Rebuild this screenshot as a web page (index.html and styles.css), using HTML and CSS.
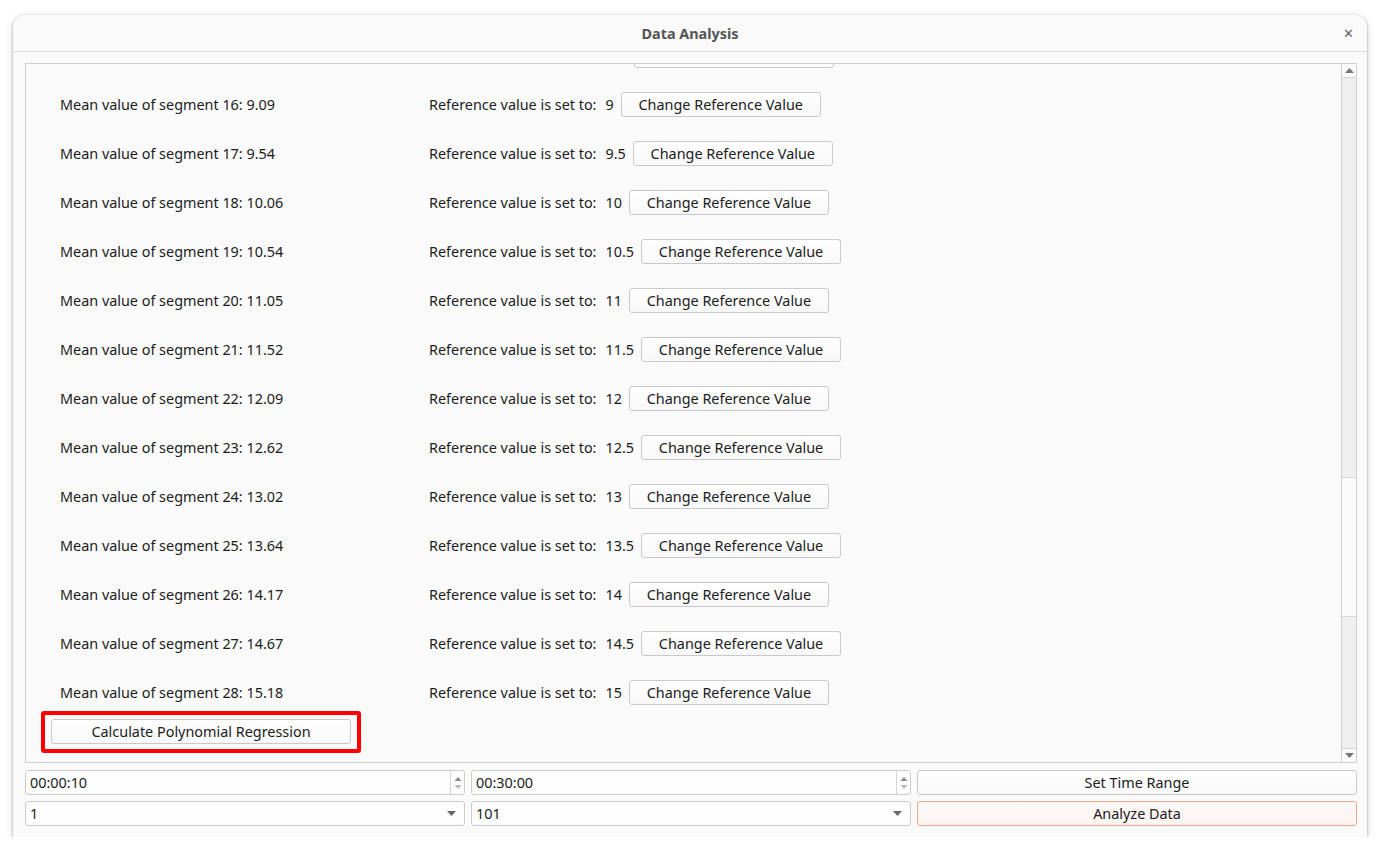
FILE: index.html
```html
<!DOCTYPE html>
<html>
<head>
<meta charset="utf-8">
<title>Data Analysis</title>
<link rel="stylesheet" href="styles.css">
</head>
<body>
<div class="window">
  <div class="titlebar">
    <span class="title">Data Analysis</span>
    <span class="close">&#x2715;</span>
  </div>
  <div class="content">
    <div class="scrollarea">
      <div class="viewport">
        <div class="list">
          <div class="row"><span class="mean"></span><span class="partial-btn"></span></div>
          <div class="row"><span class="mean">Mean value of segment 16: 9.09</span><span class="ref">Reference value is set to:</span><span class="val">9</span><button class="btn ref-btn">Change Reference Value</button></div>
          <div class="row"><span class="mean">Mean value of segment 17: 9.54</span><span class="ref">Reference value is set to:</span><span class="val">9.5</span><button class="btn ref-btn">Change Reference Value</button></div>
          <div class="row"><span class="mean">Mean value of segment 18: 10.06</span><span class="ref">Reference value is set to:</span><span class="val">10</span><button class="btn ref-btn">Change Reference Value</button></div>
          <div class="row"><span class="mean">Mean value of segment 19: 10.54</span><span class="ref">Reference value is set to:</span><span class="val">10.5</span><button class="btn ref-btn">Change Reference Value</button></div>
          <div class="row"><span class="mean">Mean value of segment 20: 11.05</span><span class="ref">Reference value is set to:</span><span class="val">11</span><button class="btn ref-btn">Change Reference Value</button></div>
          <div class="row"><span class="mean">Mean value of segment 21: 11.52</span><span class="ref">Reference value is set to:</span><span class="val">11.5</span><button class="btn ref-btn">Change Reference Value</button></div>
          <div class="row"><span class="mean">Mean value of segment 22: 12.09</span><span class="ref">Reference value is set to:</span><span class="val">12</span><button class="btn ref-btn">Change Reference Value</button></div>
          <div class="row"><span class="mean">Mean value of segment 23: 12.62</span><span class="ref">Reference value is set to:</span><span class="val">12.5</span><button class="btn ref-btn">Change Reference Value</button></div>
          <div class="row"><span class="mean">Mean value of segment 24: 13.02</span><span class="ref">Reference value is set to:</span><span class="val">13</span><button class="btn ref-btn">Change Reference Value</button></div>
          <div class="row"><span class="mean">Mean value of segment 25: 13.64</span><span class="ref">Reference value is set to:</span><span class="val">13.5</span><button class="btn ref-btn">Change Reference Value</button></div>
          <div class="row"><span class="mean">Mean value of segment 26: 14.17</span><span class="ref">Reference value is set to:</span><span class="val">14</span><button class="btn ref-btn">Change Reference Value</button></div>
          <div class="row"><span class="mean">Mean value of segment 27: 14.67</span><span class="ref">Reference value is set to:</span><span class="val">14.5</span><button class="btn ref-btn">Change Reference Value</button></div>
          <div class="row"><span class="mean">Mean value of segment 28: 15.18</span><span class="ref">Reference value is set to:</span><span class="val">15</span><button class="btn ref-btn">Change Reference Value</button></div>
          <div class="calc-wrap">
            <button class="btn calc-btn">Calculate Polynomial Regression</button>
            <span class="highlight"></span>
          </div>
        </div>
      </div>
      <div class="scrollbar">
        <div class="sb-arrow sb-up"><svg width="9" height="5" viewBox="0 0 9 5"><path d="M0 5 L4.5 0 L9 5 Z" fill="#777"/></svg></div>
        <div class="sb-track">
          <div class="sb-space-top"></div>
          <div class="sb-handle"></div>
          <div class="sb-space-bottom"></div>
        </div>
        <div class="sb-arrow sb-down"><svg width="9" height="5" viewBox="0 0 9 5"><path d="M0 0 L4.5 5 L9 0 Z" fill="#777"/></svg></div>
      </div>
    </div>
    <div class="controls">
      <div class="field spin"><span class="field-text">00:00:10</span><span class="spin-btns"><svg width="8" height="16" viewBox="0 0 8 16"><path d="M0.5 6 L4 2 L7.5 6 Z" fill="#8a8a8a"/><path d="M0.5 10 L4 14 L7.5 10 Z" fill="#bbb"/></svg></span></div>
      <div class="field spin"><span class="field-text">00:30:00</span><span class="spin-btns"><svg width="8" height="16" viewBox="0 0 8 16"><path d="M0.5 6 L4 2 L7.5 6 Z" fill="#8a8a8a"/><path d="M0.5 10 L4 14 L7.5 10 Z" fill="#bbb"/></svg></span></div>
      <button class="btn wide-btn">Set Time Range</button>
      <div class="field combo"><span class="field-text">1</span><svg class="combo-arrow" width="9" height="5" viewBox="0 0 9 5"><path d="M0 0 L4.5 5 L9 0 Z" fill="#666"/></svg></div>
      <div class="field combo"><span class="field-text">101</span><svg class="combo-arrow" width="9" height="5" viewBox="0 0 9 5"><path d="M0 0 L4.5 5 L9 0 Z" fill="#666"/></svg></div>
      <button class="btn wide-btn default-btn">Analyze Data</button>
    </div>
  </div>
</div>
</body>
</html>
```
FILE: styles.css
```css
* { box-sizing: border-box; }
html, body { margin: 0; padding: 0; background: #ffffff; }
body {
  font-family: "Noto Sans", "Open Sans", "DejaVu Sans", sans-serif;
  font-size: 14.4px;
  color: #1c1c1c;
  padding: 15px 18px 0 13px;
}
.window {
  width: 1354px;
  height: 822px;
  background: #fafafa;
  border-radius: 12px 12px 0 0;
  box-shadow: 0 1px 3px rgba(0,0,0,0.35), 0 2px 10px rgba(0,0,0,0.12);
  display: flex;
  flex-direction: column;
}
.titlebar {
  height: 37px;
  border-bottom: 1px solid #dcdcdc;
  position: relative;
  display: flex;
  align-items: center;
  justify-content: center;
}
.title {
  font-weight: bold;
  color: #555;
  font-size: 14.4px;
}
.close {
  position: absolute;
  right: 13px;
  top: 9px;
  font-size: 13px;
  color: #666;
}
.content {
  flex: 1;
  padding: 11px 10px 11px 12px;
  display: flex;
  flex-direction: column;
}
.scrollarea {
  height: 700px;
  border: 1px solid #cfcfcf;
  display: flex;
  background: #fafafa;
}
.viewport {
  flex: 1;
  overflow: hidden;
  display: flex;
  flex-direction: column;
  justify-content: flex-end;
}
.list {
  display: flex;
  flex-direction: column;
  padding-bottom: 18px;
}
.row {
  height: 49px;
  display: flex;
  align-items: center;
  padding-left: 34px;
}
.mean { width: 369px; flex: none; }
.ref { margin-right: 9px; }
.val { margin-right: 7px; }
.partial-btn {
  margin-left: 205px;
  width: 200px;
  height: 25px;
  border: 1px solid #c9c9c9;
  border-radius: 3px;
  background: #fcfcfc;
}
.btn {
  font-family: inherit;
  font-size: 14.4px;
  color: #1c1c1c;
  background: linear-gradient(#fefefe, #f8f8f8);
  border: 1px solid #c9c9c9;
  border-radius: 3px;
  height: 25px;
  padding: 0;
}
.ref-btn { width: 200px; }
.calc-wrap {
  position: relative;
  margin-top: 2px;
  margin-left: 25px;
  width: 300px;
}
.calc-btn { width: 300px; display: block; }
.highlight {
  position: absolute;
  left: -10px;
  top: -8px;
  width: 320px;
  height: 42px;
  border: 4px solid #ff0000;
  border-radius: 3px;
}
.scrollbar {
  width: 15px;
  border-left: 1px solid #d0d0d0;
  display: flex;
  flex-direction: column;
}
.sb-arrow {
  height: 14px;
  background: #fafafa;
  display: flex;
  align-items: center;
  justify-content: center;
}
.sb-up { border-bottom: 1px solid #d6d6d6; }
.sb-down { border-top: 1px solid #d6d6d6; }
.sb-track {
  flex: 1;
  display: flex;
  flex-direction: column;
  background: #efefef;
}
.sb-space-top { height: 399px; }
.sb-handle {
  height: 140px;
  background: #fafafa;
  border-top: 1px solid #d8d8d8;
  border-bottom: 1px solid #d8d8d8;
}
.sb-space-bottom { flex: 1; }
.controls {
  margin-top: 7px;
  display: grid;
  grid-template-columns: 1fr 1fr 1fr;
  column-gap: 6px;
  row-gap: 6px;
}
.field {
  height: 25px;
  border: 1px solid #cccccc;
  border-radius: 3px;
  background: #fdfdfd;
  display: flex;
  align-items: center;
  padding-left: 4px;
  position: relative;
}
.field-text { flex: 1; }
.spin-btns {
  width: 14px;
  height: 100%;
  border-left: 1px solid #d4d4d4;
  display: flex;
  align-items: center;
  justify-content: center;
}
.combo-arrow { margin-right: 8px; }
.wide-btn { width: 100%; }
.default-btn {
  border-color: #f0a68c;
  background: linear-gradient(#fdf9f8, #fbf4f2);
}
```
